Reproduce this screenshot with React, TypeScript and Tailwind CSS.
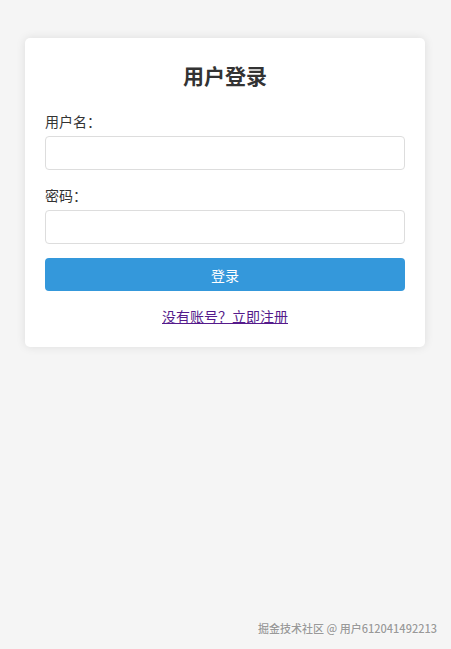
import { useState } from "react";

const App = () => {
  const [formData, setFormData] = useState({ username: "", password: "" });

  const handleChange = (e: any) => {
    setFormData({ ...formData, [e.target.name]: e.target.value });
  };

  return (
    <div
      className="relative min-h-screen bg-[#f5f5f5] pt-[38px]"
      style={{ fontFamily: '"Noto Sans CJK SC", "Noto Sans", sans-serif' }}
    >
      <div className="ml-[25px] w-[400px] rounded-[5px] bg-white px-5 pt-[25px] pb-[21px] shadow-[0_0_10px_rgba(0,0,0,0.1)]">
        <h2 className="mb-6 text-center text-[21px] leading-6 font-bold text-[#333]">
          用户登录
        </h2>
        <form onSubmit={(e) => e.preventDefault()}>
          <label className="mb-[5px] block text-sm leading-5 text-[#333]">用户名：</label>
          <input
            type="text"
            name="username"
            value={formData.username}
            onChange={handleChange}
            className="mb-[15px] block h-[34px] w-full rounded border border-[#ddd] px-2 text-sm outline-none"
          />
          <label className="mb-[5px] block text-sm leading-5 text-[#333]">密码：</label>
          <input
            type="password"
            name="password"
            value={formData.password}
            onChange={handleChange}
            className="mb-[14px] block h-[34px] w-full rounded border border-[#ddd] px-2 text-sm outline-none"
          />
          <button
            type="submit"
            className="block h-[33px] w-full rounded bg-[#3498db] text-sm text-white"
          >
            登录
          </button>
        </form>
        <div className="mt-[15px] text-center text-sm leading-5">
          <a href="#" className="text-[#551a8b] underline">
            没有账号？立即注册
          </a>
        </div>
      </div>
      <div className="absolute right-[14px] bottom-[13px] text-[11px] font-medium text-[#999] [text-shadow:0_0_2px_#fff]">
        掘金技术社区 @ 用户612041492213
      </div>
    </div>
  );
};

export default App;
